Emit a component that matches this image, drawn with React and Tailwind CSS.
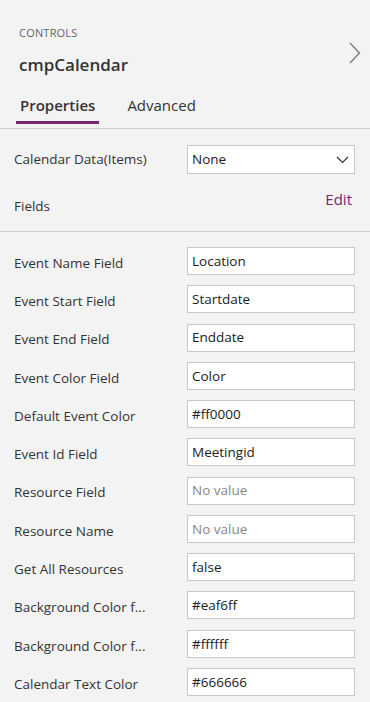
const fields = [
  { label: 'Event Name Field', value: 'Location' },
  { label: 'Event Start Field', value: 'Startdate' },
  { label: 'Event End Field', value: 'Enddate' },
  { label: 'Event Color Field', value: 'Color' },
  { label: 'Default Event Color', value: '#ff0000' },
  { label: 'Event Id Field', value: 'Meetingid' },
  { label: 'Resource Field', value: '', placeholder: 'No value' },
  { label: 'Resource Name', value: '', placeholder: 'No value' },
  { label: 'Get All Resources', value: 'false' },
  { label: 'Background Color f...', value: '#eaf6ff' },
  { label: 'Background Color f...', value: '#ffffff' },
  { label: 'Calendar Text Color', value: '#666666' },
];

export default function App() {
  return (
    <div className="w-[370px] h-[702px] overflow-hidden bg-[#f3f3f3] font-['Open_Sans',sans-serif] text-[#333]">
      {/* HEADER */}
      <div className="relative px-[19px] pt-[25px] border-b border-[#d0d0d0]">
        <p className="text-[11px] leading-[16px] text-[#666] tracking-[0.2px]">CONTROLS</p>
        <h1 className="mt-[12px] text-[17px] leading-[24px] font-semibold text-[#333]">cmpCalendar</h1>
        <svg width="12" height="22" viewBox="0 0 12 22" fill="none" className="absolute left-[349px] top-[42px]">
          <path d="M1 1 L10.5 11 L1 21" stroke="#777" strokeWidth="1.3" />
        </svg>
        <div className="mt-[18px] flex items-end gap-[31px]">
          <div className="flex flex-col">
            <span className="text-[15px] leading-[20px] font-semibold text-[#333] px-[1px]">Properties</span>
            <div className="mt-[6px] -mx-[3px] h-[3px] bg-[#742774]" />
          </div>
          <span className="text-[15px] leading-[20px] text-[#333] mb-[9px]">Advanced</span>
        </div>
        <div className="h-[4px]" />
      </div>

      {/* DATA SOURCE */}
      <div className="pl-[14px] pr-[15px] pt-[16px] pb-[14px] border-b border-[#d0d0d0]">
        <div className="flex items-center justify-between">
          <span className="text-[13.5px] text-[#333]">Calendar Data(Items)</span>
          <div className="w-[168px] h-[29px] bg-white border border-[#c8c8c8] flex items-center justify-between pl-[4px] pr-[5px]">
            <span className="text-[13.5px] text-[#222]">None</span>
            <svg width="13" height="8" viewBox="0 0 13 8" fill="none">
              <path d="M1 1 L6.5 6.5 L12 1" stroke="#333" strokeWidth="1.2" />
            </svg>
          </div>
        </div>
        <div className="mt-[10px] flex items-center justify-between h-[33px]">
          <span className="text-[13.5px] text-[#333] mt-[11px]">Fields</span>
          <span className="text-[15px] text-[#742774] mr-[3px] -mt-[2px]">Edit</span>
        </div>
      </div>

      {/* FIELDS */}
      <div className="pl-[14px] pr-[15px] pt-[15px] flex flex-col gap-[10.27px]">
        {fields.map((f, i) => (
          <div key={i} className="flex items-center justify-between">
            <span className="text-[13.5px] text-[#333] mt-[4px]">{f.label}</span>
            <div className="w-[168px] h-[28px] bg-white border border-[#c8c8c8] flex items-center px-[4px]">
              {f.value ? (
                <span className="text-[13.5px] text-[#222]">{f.value}</span>
              ) : (
                <span className="text-[13.5px] text-[#888]">{f.placeholder}</span>
              )}
            </div>
          </div>
        ))}
      </div>
    </div>
  );
}
